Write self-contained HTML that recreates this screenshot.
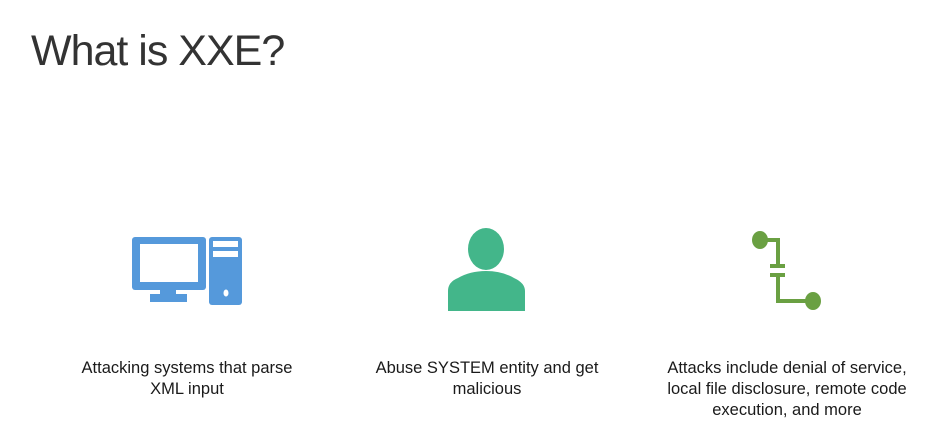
<!DOCTYPE html>
<html><head><style>
body{margin:0;width:930px;height:440px;background:#fff;overflow:hidden;position:relative;font-family:"Liberation Sans",sans-serif;color:#111}
h1{position:absolute;left:31px;top:27px;margin:0;font-weight:normal;font-size:43px;letter-spacing:-1px;color:#333}
.c{position:absolute;width:320px;text-align:center;font-size:16.5px;line-height:21px;top:358px;color:#1a1a1a}
</style></head><body>
<h1>What is XXE?</h1>
<svg width="930" height="440" style="position:absolute;left:0;top:0">
<g fill="#5599db">
<rect x="132" y="237" width="74" height="53" rx="3"/>
<rect x="160" y="289" width="16" height="6"/>
<rect x="150" y="294" width="37" height="8"/>
<rect x="209" y="237" width="33" height="68" rx="3"/>
</g>
<rect x="140" y="244" width="58" height="38" fill="#fff"/>
<rect x="213" y="241" width="25" height="6" fill="#fff"/>
<rect x="213" y="251" width="25" height="6" fill="#fff"/>
<ellipse cx="226" cy="293" rx="2.5" ry="3.5" fill="#fff"/>
<g fill="#43b68a">
<ellipse cx="486" cy="249" rx="18" ry="21"/>
<path d="M448 311 V291 Q448 282 458 278 Q470 271 486 271 Q502 271 514 278 Q525 283 525 291 V311 Z"/>
</g>
<g fill="#6aa042">
<ellipse cx="760" cy="240" rx="8" ry="9"/>
<ellipse cx="813" cy="301" rx="8" ry="9"/>
<path d="M765 238 H780 V264 H785 V268 H770 V264 H776 V242 H765 Z"/>
<path d="M770 273 H785 V277 H780 V299 H808 V303 H776 V277 H770 Z"/>
</g>
</svg>
<div class="c" style="left:27px">Attacking systems that parse<br>XML input</div>
<div class="c" style="left:327px">Abuse SYSTEM entity and get<br>malicious</div>
<div class="c" style="left:627px">Attacks include denial of service,<br>local file disclosure, remote code<br>execution, and more</div>
</body></html>
